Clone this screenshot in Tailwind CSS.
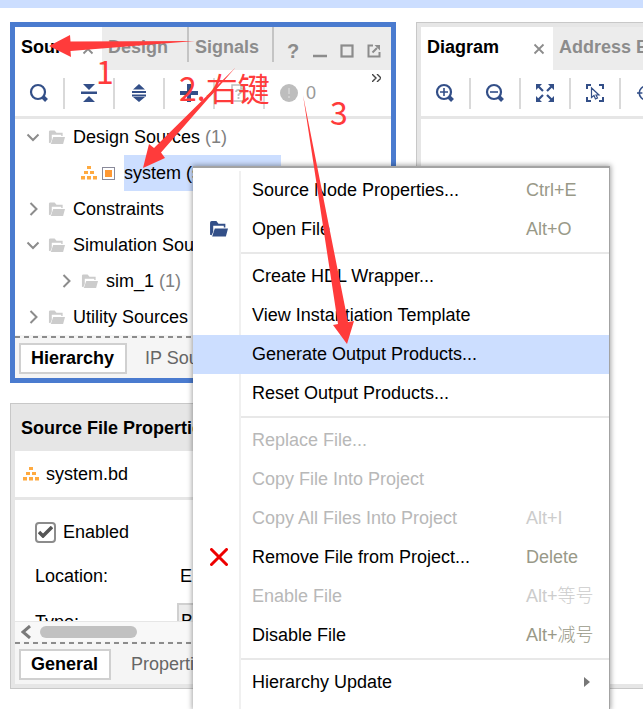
<!DOCTYPE html>
<html lang="en">
<head>
<meta charset="utf-8">
<meta name="viewport" content="width=device-width, initial-scale=1">
<title>Block design sources</title>
<script src="https://cdn.jsdelivr.net/npm/@tailwindcss/browser@4"></script>
</head>
<body class="bg-white font-['Liberation_Sans','Noto_Sans_CJK_SC',sans-serif] text-[18px] leading-6 text-black">
<svg class="hidden">
  <symbol id="folder" viewBox="0 0 18 16"><path d="M1 14V2.5Q1 1 2.500 1H7l2 2.500h6.500V7H14V5.500H4V11L2.500 14.500z M5.500 8H18L16 15.500H3z" fill="currentColor"/></symbol>
  <symbol id="blocks" viewBox="0 0 16 14"><path d="M6 0h4v3H6zM3 5h4v3H3zM9 5h4v3H9zM0 10h4v3.5H0zM6 10h4v3.5H6zM12 10h4v3.5h-4z" fill="#ffaa40"/></symbol>
  <symbol id="down" viewBox="0 0 14 14"><path d="M1.500 4.500L7 10L12.500 4.500" fill="none" stroke="#8c8c8c" stroke-width="2"/></symbol>
  <symbol id="right" viewBox="0 0 14 14"><path d="M4.500 1L10.500 7L4.500 13" fill="none" stroke="#8c8c8c" stroke-width="2"/></symbol>
  <symbol id="close" viewBox="0 0 12 12"><path d="M1.500 1.500L10.500 10.500M10.500 1.500L1.500 10.500" fill="none" stroke="#8c8c8c" stroke-width="1.800"/></symbol>
  <symbol id="lens" viewBox="0 0 20 20"><circle cx="9" cy="9" r="7" fill="none" stroke="#334f88" stroke-width="2.200"/><path d="M14 14L17.500 17.500" stroke="#334f88" stroke-width="4"/></symbol>
</svg>
<div class="relative flex h-screen flex-col overflow-hidden">
  <div class="h-2 shrink-0 bg-[#ccdeff]"></div>
  <main class="grid min-h-0 flex-1 grid-cols-[386px_1fr] gap-5 pt-[14px] pb-5 pl-[10px]">
    <div class="flex min-h-0 min-w-0 flex-col gap-5">
      <!-- Sources panel -->
      <section class="shrink-0 border-[5px] border-[#4a7bcf]" aria-label="Sources">
        <header class="flex h-[43px] bg-[#ececec] font-bold text-[#8c8c8c]">
          <div class="flex w-[87px] items-start justify-between bg-white pt-2 pr-2 pl-[6px]">
            <button class="text-black">Sour</button>
            <button class="mt-2" aria-label="Close Sources"><svg class="size-3"><use href="#close"/></svg></button>
          </div>
          <button class="flex h-[35px] w-[87px] items-start border-r-2 border-[#c4c4c4] pt-2 pl-[6px]">Design</button>
          <button class="flex h-[35px] w-[85px] items-start border-r-2 border-[#c4c4c4] pt-2 pl-[6px]">Signals</button>
          <div class="flex items-center gap-[13px] pt-1 pl-3">
            <button class="w-[14px] text-[20px]" aria-label="Help">?</button>
            <button aria-label="Minimize"><svg class="size-[14px]"><path d="M0 12H14" stroke="#8c8c8c" stroke-width="2.500"/></svg></button>
            <button aria-label="Maximize"><svg class="size-[14px]"><rect x="1.500" y="1.500" width="11" height="11" fill="none" stroke="#8c8c8c" stroke-width="2.200"/></svg></button>
            <button aria-label="Float"><svg class="size-[14px]"><path d="M6 1.500H1.500V12.500H12.500V8M5.500 8.500L10 4" fill="none" stroke="#8c8c8c" stroke-width="2"/><path d="M7.500 1H13V6.500z" fill="#8c8c8c"/></svg></button>
          </div>
        </header>
        <div class="relative flex h-[49px] items-center border-b-[3px] border-[#e6e6e6]">
          <button class="flex h-[31px] w-[50px] items-center justify-center border-r-2 border-[#d9d9d9]" aria-label="Search"><svg class="size-5"><use href="#lens"/></svg></button>
          <button class="flex h-[31px] w-[50px] items-center justify-center border-r-2 border-[#d9d9d9]" aria-label="Collapse all"><svg class="h-5 w-4" viewBox="0 0 16 20"><path d="M2 1H14L8 7zM0 8.500H16V11H0zM2 19H14L8 13z" fill="#334f88"/></svg></button>
          <button class="flex h-[31px] w-[50px] items-center justify-center border-r-2 border-[#d9d9d9]" aria-label="Expand all"><svg class="h-5 w-4" viewBox="0 0 16 20"><path d="M2 6.500H14L8 1zM1 8H15V10H1zM1 11.500H15V13.500H1zM2 14H14L8 19z" fill="#334f88"/></svg></button>
          <button class="flex h-[31px] w-[50px] items-center justify-center border-r-2 border-[#d9d9d9]" aria-label="Add sources"><svg class="size-[18px]"><path d="M9 0V18M0 9H18" stroke="#334f88" stroke-width="4"/></svg></button>
          <button class="flex h-[31px] w-[50px] items-center justify-center border-r-2 border-[#d9d9d9] text-[#bdbdbd]" aria-label="Show missing sources" disabled><svg class="size-[18px]" viewBox="0 0 18 18"><path d="M11 1H2V17H15V5zM11 1V5H15" fill="none" stroke="currentColor" stroke-width="1.500"/><path d="M6 8Q6 6 8.500 6T11 8Q11 9 8.500 10.500V12M8.500 13V15" fill="none" stroke="currentColor" stroke-width="1.800"/></svg></button>
          <div class="flex items-center gap-2 pl-[15px] text-[#999999]"><svg class="size-[18px]"><circle cx="9" cy="9" r="9" fill="#bdbdbd"/><path d="M9 4V10M9 12V14" stroke="#d0d0d0" stroke-width="2"/></svg><span>0</span></div>
          <button class="ml-auto self-start pt-1 pr-[10px]" aria-label="More tools"><svg class="h-2 w-[9px]"><path d="M0 0L4 4L0 8M5 0L9 4L5 8" fill="none" stroke="#444" stroke-width="1.400"/></svg></button>
        </div>
        <ul class="whitespace-nowrap">
          <li class="flex h-9 items-center gap-2 pl-[11px]"><svg class="size-[14px]"><use href="#down"/></svg><svg class="h-4 w-[17px] text-[#cccccc]"><use href="#folder"/></svg><span>Design Sources <span class="text-[#808080]">(1)</span></span></li>
          <li class="flex h-9 items-center gap-[5px] pl-[66px]"><svg class="h-[14px] w-4"><use href="#blocks"/></svg><svg class="size-[13px]"><rect x=".5" y=".5" width="12" height="12" fill="#fff" stroke="#8a8a9a"/><rect x="3" y="3" width="7" height="7" fill="#ff9933"/></svg><span class="ml-1 flex h-full w-[157px] items-center overflow-hidden bg-[#ccdeff]">system (system.bd)</span></li>
          <li class="flex h-9 items-center gap-2 pl-[11px]"><svg class="size-[14px]"><use href="#right"/></svg><svg class="h-4 w-[17px] text-[#cccccc]"><use href="#folder"/></svg><span>Constraints</span></li>
          <li class="flex h-9 items-center gap-2 pl-[11px]"><svg class="size-[14px]"><use href="#down"/></svg><svg class="h-4 w-[17px] text-[#cccccc]"><use href="#folder"/></svg><span>Simulation Sources</span></li>
          <li class="flex h-9 items-center gap-2 pl-11"><svg class="size-[14px]"><use href="#right"/></svg><svg class="h-4 w-[17px] text-[#cccccc]"><use href="#folder"/></svg><span>sim_1 <span class="text-[#808080]">(1)</span></span></li>
          <li class="flex h-9 items-center gap-2 pl-[11px]"><svg class="size-[14px]"><use href="#right"/></svg><svg class="h-4 w-[17px] text-[#cccccc]"><use href="#folder"/></svg><span>Utility Sources</span></li>
        </ul>
        <svg class="block h-[3px] w-full bg-[#f5f5f5]"><path d="M0 2H400" stroke="#8c8c8c" stroke-width="2" stroke-dasharray="5 4"/></svg>
        <footer class="flex h-10 items-center gap-[18px] bg-[#f5f5f5] pl-1">
          <button class="flex h-[31px] items-center border-2 border-[#d0d0d0] bg-white pr-[11px] pl-[10px] font-bold">Hierarchy</button>
          <button class="text-[#666666]">IP Sources</button>
        </footer>
      </section>

      <!-- Properties panel -->
      <section class="flex min-h-0 flex-1 flex-col border border-[#c8c8c8] bg-[#e6e6e6] px-1 pb-1" aria-label="Source File Properties">
        <h2 class="flex h-[47px] shrink-0 items-center pl-[6px] font-bold">Source File Properties</h2>
        <div class="flex h-[46px] shrink-0 items-center gap-[7px] bg-white pl-2"><svg class="h-[14px] w-4"><use href="#blocks"/></svg>system.bd</div>
        <div class="mt-[3px] flex min-h-0 flex-1 flex-col gap-5 overflow-hidden bg-white pt-5 pl-5">
          <label class="flex h-6 shrink-0 items-center gap-[7px]">
            <span class="grid size-[21px] place-items-center">
              <input type="checkbox" checked class="col-start-1 row-start-1 size-[21px] appearance-none rounded-[4px] border-2 border-[#8c8c8c] bg-white">
              <svg class="pointer-events-none col-start-1 row-start-1 h-3 w-[15px]"><path d="M1 6L5 10L14 1" fill="none" stroke="#555" stroke-width="3.500"/></svg>
            </span>Enabled</label>
          <div class="flex h-6 shrink-0 items-center whitespace-nowrap"><span class="w-[145px]">Location:</span><span>E:/project/system</span></div>
          <div class="flex shrink-0 items-start whitespace-nowrap"><label for="type" class="w-[142px] pt-[2px]">Type:</label><select id="type" class="-mt-[5px] h-9 w-[180px] appearance-none border-2 border-[#d0d0d0] bg-[#ececec] pl-[2px]"><option>Block Designs</option></select></div>
        </div>
        <div class="flex h-5 shrink-0 items-center gap-[9px] border-t border-[#e6e6e6] bg-[#f8f8f8] pl-[6px]">
          <svg class="h-[14px] w-[10px]"><path d="M9 1L2 7L9 13" fill="none" stroke="#7a7a7a" stroke-width="3"/></svg>
          <div class="h-3 w-[97px] rounded-full bg-[#c1c1c1]"></div>
        </div>
        <svg class="block h-[3px] w-full shrink-0 bg-[#f5f5f5]"><path d="M0 2H400" stroke="#8c8c8c" stroke-width="2" stroke-dasharray="5 4"/></svg>
        <footer class="flex h-10 shrink-0 items-center gap-5 bg-[#f5f5f5] pl-1">
          <button class="flex h-[31px] items-center border-2 border-[#d0d0d0] bg-white pr-[11px] pl-[10px] font-bold">General</button>
          <button class="text-[#666666]">Properties</button>
        </footer>
      </section>
    </div>

    <!-- Diagram panel -->
    <section class="flex min-w-0 flex-col overflow-hidden border-y border-l border-[#c8c8c8] bg-[#e6e6e6] py-1 pl-1" aria-label="Diagram">
      <header class="flex h-[43px] shrink-0 overflow-hidden bg-[#ececec] font-bold whitespace-nowrap">
        <div class="flex w-[132px] shrink-0 items-start justify-between bg-white pt-2 pr-2 pl-[6px]">
          <button>Diagram</button>
          <button class="mt-2" aria-label="Close Diagram"><svg class="size-3"><use href="#close"/></svg></button>
        </div>
        <button class="flex items-start pt-2 pl-[6px] text-[#8c8c8c]">Address Editor</button>
      </header>
      <div class="flex h-[49px] shrink-0 items-center overflow-hidden border-b-[3px] border-[#e6e6e6] bg-white">
        <button class="flex h-[31px] w-[50px] shrink-0 items-center justify-center border-r-2 border-[#d9d9d9]" aria-label="Zoom in"><svg class="size-5"><use href="#lens"/><path d="M9 5V13M5 9H13" stroke="#334f88" stroke-width="1.600"/></svg></button>
        <button class="flex h-[31px] w-[50px] shrink-0 items-center justify-center border-r-2 border-[#d9d9d9]" aria-label="Zoom out"><svg class="size-5"><use href="#lens"/><path d="M5 9H13" stroke="#334f88" stroke-width="1.600"/></svg></button>
        <button class="flex h-[31px] w-[50px] shrink-0 items-center justify-center border-r-2 border-[#d9d9d9]" aria-label="Zoom fit"><svg class="size-[18px]"><path d="M0 0H6L0 6zM18 0V6L12 0zM0 18V12L6 18zM18 18H12L18 12z" fill="#334f88"/><path d="M2 2L7 7M16 2L11 7M2 16L7 11M16 16L11 11" stroke="#334f88" stroke-width="2.200"/></svg></button>
        <button class="flex h-[31px] w-[50px] shrink-0 items-center justify-center border-r-2 border-[#d9d9d9]" aria-label="Select area"><svg class="size-[18px]"><path d="M1 5V1H5M13 1H17V5M17 13V17H13M5 17H1V13" fill="none" stroke="#334f88" stroke-width="2"/><path d="M5.500 4V13.500L8 11.500L9.500 15L11.500 14L10 11H13z" fill="#fff" stroke="#334f88" stroke-width="1.200"/></svg></button>
        <button class="flex h-[31px] w-[50px] shrink-0 items-center justify-center" aria-label="Center view"><svg class="size-[18px]" viewBox="0 0 20 20"><circle cx="10" cy="10" r="7.500" fill="none" stroke="#334f88" stroke-width="1.800"/><path d="M0 10H6M14 10H20M10 0V6M10 14V20" stroke="#334f88" stroke-width="1.800"/></svg></button>
      </div>
      <div class="flex-1 bg-white"></div>
    </section>
  </main>

  <!-- Context menu -->
  <div role="menu" class="absolute top-[166px] bottom-0 left-[193px] w-[417px] overflow-visible border-t-2 border-r border-[#a3a3a3] bg-white pt-[3px] whitespace-nowrap shadow-[0_0_5px_1px_rgba(0,0,0,0.35)]">
    <div class="absolute top-[3px] bottom-0 left-[46px] w-[2px] bg-[#f0f0f0]"></div>
    <div class="relative flex flex-col">
      <button role="menuitem" class="grid h-[39px] grid-cols-[59px_274px_1fr] items-center pb-[2px] text-left"><span></span><span>Source Node Properties...</span><span class="text-[#999988]">Ctrl+E</span></button>
      <button role="menuitem" class="grid h-[39px] grid-cols-[59px_274px_1fr] items-center pb-[2px] text-left"><svg class="ml-4 h-[17px] w-[19px] text-[#334f88]"><use href="#folder"/></svg><span>Open File</span><span class="text-[#999988]">Alt+O</span></button>
      <hr class="my-[3px] ml-12 border-t-2 border-[#e8e8e8]">
      <button role="menuitem" class="grid h-[39px] grid-cols-[59px_274px_1fr] items-center pb-[2px] text-left"><span></span><span>Create HDL Wrapper...</span></button>
      <button role="menuitem" class="grid h-[39px] grid-cols-[59px_274px_1fr] items-center pb-[2px] text-left"><span></span><span>View Instantiation Template</span></button>
      <button role="menuitem" class="grid h-[39px] grid-cols-[59px_274px_1fr] items-center bg-[#ccdeff] pb-[2px] text-left"><span></span><span>Generate Output Products...</span></button>
      <button role="menuitem" class="grid h-[39px] grid-cols-[59px_274px_1fr] items-center pb-[2px] text-left"><span></span><span>Reset Output Products...</span></button>
      <hr class="my-[3px] ml-12 border-t-2 border-[#e8e8e8]">
      <button role="menuitem" disabled class="grid h-[39px] grid-cols-[59px_274px_1fr] items-center pb-[2px] text-left text-[#b8b8b8]"><span></span><span>Replace File...</span></button>
      <button role="menuitem" disabled class="grid h-[39px] grid-cols-[59px_274px_1fr] items-center pb-[2px] text-left text-[#b8b8b8]"><span></span><span>Copy File Into Project</span></button>
      <button role="menuitem" disabled class="grid h-[39px] grid-cols-[59px_274px_1fr] items-center pb-[2px] text-left text-[#b8b8b8]"><span></span><span>Copy All Files Into Project</span><span class="text-[#cccccc]">Alt+I</span></button>
      <button role="menuitem" class="grid h-[39px] grid-cols-[59px_274px_1fr] items-center pb-[2px] text-left"><svg class="ml-[17px] size-[18px]"><path d="M1.500 1.500L16.500 16.500M16.500 1.500L1.500 16.500" stroke="#ee0000" stroke-width="3" stroke-linecap="round"/></svg><span>Remove File from Project...</span><span class="text-[#999988]">Delete</span></button>
      <button role="menuitem" disabled class="grid h-[39px] grid-cols-[59px_274px_1fr] items-center pb-[2px] text-left text-[#b8b8b8]"><span></span><span>Enable File</span><span class="font-light text-[#cccccc]">Alt+等号</span></button>
      <button role="menuitem" class="grid h-[39px] grid-cols-[59px_274px_1fr] items-center pb-[2px] text-left"><span></span><span>Disable File</span><span class="font-light text-[#999988]">Alt+减号</span></button>
      <hr class="my-[3px] ml-12 border-t-2 border-[#e8e8e8]">
      <button role="menuitem" class="grid h-[39px] grid-cols-[59px_274px_1fr] items-center pb-[2px] text-left"><span></span><span>Hierarchy Update</span><svg class="mr-[19px] h-[10px] w-[6px] justify-self-end"><path d="M0 0L6 5L0 10z" fill="#777"/></svg></button>
    </div>
  </div>

  <!-- Step annotations -->
  <svg class="pointer-events-none absolute top-0 left-0 h-[709px] w-[643px] font-['Noto_Sans_CJK_SC',sans-serif] text-[32px]" viewBox="0 0 643 709" fill="#ff3b3b">
    <path d="M49 46L70 35L70.500 41.500L195 41L70.500 51L71 57z"/>
    <path d="M143 168L149 144L154 148L235.500 67.500L161 152.500L165 158z"/>
    <path d="M347 344L333 325L338 324L303 95L348 322L354 321z"/>
    <text x="96" y="84">1</text>
    <text x="179" y="101">2.右键</text>
    <text x="330" y="125">3</text>
  </svg>
</div>
</body>
</html>
